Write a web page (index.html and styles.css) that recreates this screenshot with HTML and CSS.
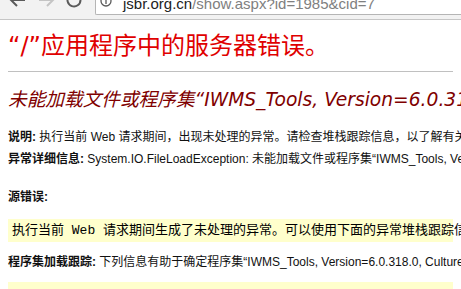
FILE: index.html
```html
<!DOCTYPE html>
<html>
<head>
    <meta charset="UTF-8">
    <title>运行时错误</title>
    <link rel="stylesheet" href="styles.css">
</head>
<body>
    <div class="toolbar">
        <svg class="nav-icon" width="18" height="18" viewBox="0 0 18 18">
            <path d="M16 9 H3 M8 3 L2 9 L8 15" fill="none" stroke="#5a5a5a" stroke-width="2"/>
        </svg>
        <svg class="nav-icon" width="18" height="18" viewBox="0 0 18 18">
            <path d="M2 9 H15 M10 3 L16 9 L10 15" fill="none" stroke="#c4c4c4" stroke-width="2"/>
        </svg>
        <svg class="nav-icon" width="18" height="18" viewBox="0 0 18 18">
            <path d="M14.5 5.5 A6.5 6.5 0 1 0 15.5 9" fill="none" stroke="#5a5a5a" stroke-width="2"/>
            <path d="M11 2 L16 2 L16 7 Z" fill="#5a5a5a"/>
        </svg>
        <div class="address">
            <svg class="info-icon" width="12" height="12" viewBox="0 0 12 12">
                <circle cx="6" cy="6" r="5" fill="none" stroke="#5a5a5a" stroke-width="1.3"/>
                <path d="M6 5 V9" stroke="#5a5a5a" stroke-width="1.3"/>
            </svg>
            <span class="host">jsbr.org.cn</span><span class="path">/show.aspx?id=1985&amp;cid=7</span>
        </div>
    </div>

    <div class="content">
        <h1>“/”应用程序中的服务器错误。</h1>
        <hr>
        <h2>未能加载文件或程序集“IWMS_Tools, Version=6.0.318.0, Culture=neutral, PublicKeyToken=null”或它的某一个依赖项。</h2>

        <p class="first"><b>说明: </b>执行当前 Web 请求期间，出现未处理的异常。请检查堆栈跟踪信息，以了解有关该错误以及代码中导致错误的出处的详细信息。</p>
        <p><b>异常详细信息: </b>System.IO.FileLoadException: 未能加载文件或程序集“IWMS_Tools, Version=6.0.318.0, Culture=neutral, PublicKeyToken=null”或它的某一个依赖项。</p>
        <p class="gap"><b>源错误:</b></p>

        <div class="code">执行当前 Web 请求期间生成了未处理的异常。可以使用下面的异常堆栈跟踪信息确定有关异常原因和发生位置的信息。</div>

        <p class="trace"><b>程序集加载跟踪:</b> 下列信息有助于确定程序集“IWMS_Tools, Version=6.0.318.0, Culture=neutral, PublicKeyToken=null”无法加载的原因。</p>

        <div class="code log">警告: 程序集绑定日志记录被关闭。</div>
    </div>
</body>
</html>
```

FILE: styles.css
```css
body {
    margin: 0;
    background-color: #fff;
    font-family: "Liberation Sans", "Noto Sans CJK SC", sans-serif;
    color: #000;
    overflow: hidden;
    white-space: nowrap;
}

/* barre du navigateur, coupée en haut */
.toolbar {
    height: 19px;
    background-color: #f2f2f2;
    border-bottom: 1px solid #c6c6c6;
    display: flex;
    align-items: flex-end;
    overflow: hidden;
}

.nav-icon {
    margin-bottom: 10px;
    margin-left: 9px;
}

.nav-icon + .nav-icon {
    margin-left: 10px;
}

.address {
    flex: 1;
    height: 24px;
    margin-left: 12px;
    margin-bottom: 4px;
    background-color: #fff;
    border: 1px solid #b5b5b5;
    border-top: none;
    border-right: none;
    border-radius: 0 0 0 2px;
    display: flex;
    align-items: flex-end;
    padding: 0 0 2px 4px;
    font-size: 15px;
    line-height: 16px;
}

.info-icon {
    margin-bottom: 5px;
    margin-right: 11px;
}

.host {
    color: #222;
}

.path {
    color: #808080;
}

.content {
    padding: 0 8px;
}

h1 {
    margin: 12px 0 0;
    font-family: "DejaVu Sans", "Noto Sans CJK SC", sans-serif;
    font-weight: normal;
    font-size: 24px;
    line-height: 28px;
    color: #e00000;
}

hr {
    margin: 11px 0 0;
    border: none;
    border-top: 1px solid #c0c0c0;
}

h2 {
    margin: 17px 0 0;
    font-family: "DejaVu Sans", "Noto Sans CJK SC", sans-serif;
    font-weight: normal;
    font-style: italic;
    font-size: 18.67px;
    line-height: 22px;
    color: #800000;
}

p {
    margin: 6px 0 0;
    font-size: 12px;
    line-height: 16px;
    color: #111;
}

p.first {
    margin-top: 18px;
}

p.gap {
    margin-top: 22px;
}

p.trace {
    margin-top: 12px;
}

.code {
    margin-top: 14px;
    background-color: #ffffcc;
    padding: 4px;
    font-family: "Liberation Mono", "Noto Sans CJK SC", monospace;
    font-size: 13px;
    line-height: 15px;
}

/* le journal commence par une ligne vide */
.code.log {
    margin-top: 12px;
    padding-top: 19px;
}
```
